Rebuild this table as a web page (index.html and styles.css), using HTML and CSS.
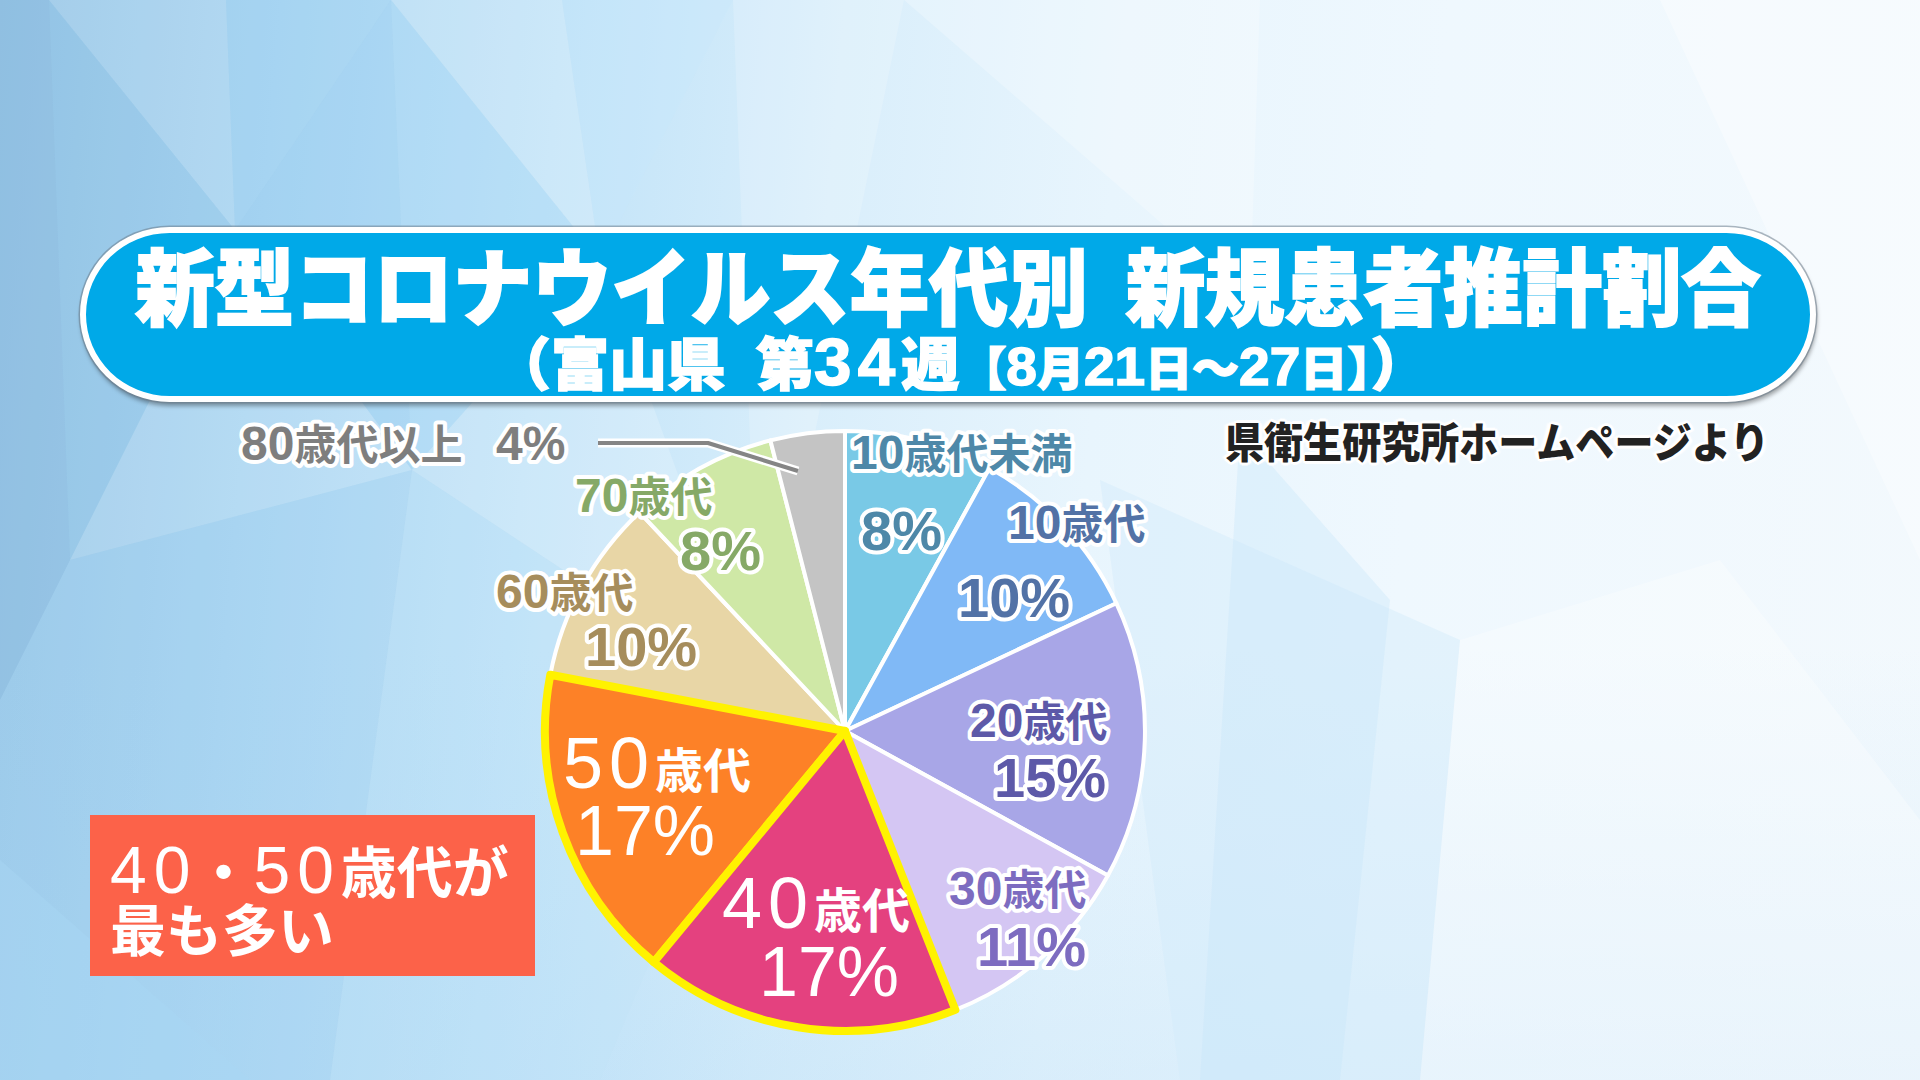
FILE: index.html
```html
<!DOCTYPE html>
<html lang="ja">
<head>
<meta charset="utf-8">
<title>新型コロナウイルス年代別 新規患者推計割合</title>
<link rel="stylesheet" href="styles.css">
</head>
<body>
<div class="stage">
  <svg class="bg" viewBox="0 0 1920 1080" preserveAspectRatio="none" aria-hidden="true">
    <polygon points="0,0 49,0 70,560 0,700" fill="#7fb1d6" opacity=".30"/>
    <polygon points="49,0 226,0 235,230" fill="#ffffff" opacity=".10"/>
    <polygon points="49,0 235,230 70,560" fill="#7cb6de" opacity=".18"/>
    <polygon points="226,0 391,0 235,230" fill="#9dd0f2" opacity=".30"/>
    <polygon points="235,230 412,470 70,560" fill="#ffffff" opacity=".12"/>
    <polygon points="391,0 412,470 235,230" fill="#8cc8ef" opacity=".25"/>
    <polygon points="391,0 562,0 600,260" fill="#ffffff" opacity=".18"/>
    <polygon points="391,0 600,260 412,470" fill="#a5d6f5" opacity=".30"/>
    <polygon points="562,0 733,0 600,260" fill="#c8e8fb" opacity=".30"/>
    <polygon points="600,260 760,700 412,470" fill="#ffffff" opacity=".18"/>
    <polygon points="733,0 904,0 760,700" fill="#ffffff" opacity=".18"/>
    <polygon points="904,0 1260,0 1250,300" fill="#ffffff" opacity=".25"/>
    <polygon points="70,560 412,470 330,1080 0,1080 0,700" fill="#9fd0f1" opacity=".25"/>
    <polygon points="412,470 760,700 600,1080 330,1080" fill="#bfe3f9" opacity=".25"/>
    <polygon points="0,860 250,1080 0,1080" fill="#a9d6f3" opacity=".45"/>
    <polygon points="1100,480 1460,640 1420,1080 1180,1080" fill="#d2ebfb" opacity=".45"/>
    <polygon points="1460,640 1720,560 1920,820 1920,1080 1420,1080" fill="#ffffff" opacity=".30"/>
    <polygon points="1660,0 1920,0 1920,560" fill="#ffffff" opacity=".35"/>
    <polygon points="1240,430 1390,600 1340,1080 1200,1080" fill="#c6e5fa" opacity=".35"/>
  </svg>

  <header class="title">
    <div class="t1"><span class="t1-in">新型コロナウイルス年代別<span class="sp"></span>新規患者推計割合</span></div>
    <div class="t2"><span class="t2-in">（富山県<span class="sp2"></span>第<span class="wk">34</span>週<span class="sm">【<span class="sn">8</span>月<span class="sn">21</span>日～<span class="sn">27</span>日】</span>）</span></div>
  </header>

  <main class="content">
    <svg class="chart" viewBox="0 402 1920 678" aria-label="年代別割合円グラフ">
      <g class="pie">
        <path class="s-u10" d="M845 731 L845 431 A300 300 0 0 1 989.5 468.1 Z"/>
        <path class="s-10" d="M845 731 L989.5 468.1 A300 300 0 0 1 1116.4 603.3 Z"/>
        <path class="s-20" d="M845 731 L1116.4 603.3 A300 300 0 0 1 1107.9 875.5 Z"/>
        <path class="s-30" d="M845 731 L1107.9 875.5 A300 300 0 0 1 955.4 1009.9 Z"/>
        <path class="s-60" d="M845 731 L550.3 674.8 A300 300 0 0 1 639.6 512.3 Z"/>
        <path class="s-70" d="M845 731 L639.6 512.3 A300 300 0 0 1 770.4 440.4 Z"/>
        <path class="s-80" d="M845 731 L770.4 440.4 A300 300 0 0 1 845 431 Z"/>
        <path class="s-50 hl" d="M845 731 L653.8 962.2 A300 300 0 0 1 550.3 674.8 Z"/>
        <path class="s-40 hl" d="M845 731 L955.4 1009.9 A300 300 0 0 1 653.8 962.2 Z"/>
      </g>

      <polyline class="leader-bg" points="598,443 708,443 798,471"/>
      <polyline class="leader" points="598,443 708,443 798,471"/>

      <text class="lbl c-u10" x="851" y="469"><tspan class="n">10</tspan>歳代未満</text>
      <text class="pct c-u10" x="861" y="550">8%</text>

      <text class="lbl c-10" x="1008" y="539"><tspan class="n">10</tspan>歳代</text>
      <text class="pct c-10" x="958" y="617">10%</text>

      <text class="lbl c-20" x="970" y="737"><tspan class="n">20</tspan>歳代</text>
      <text class="pct c-20" x="994" y="797">15%</text>

      <text class="lbl c-30" x="949" y="905"><tspan class="n">30</tspan>歳代</text>
      <text class="pct c-30" x="977" y="966">11%</text>

      <text class="big" x="722" y="928"><tspan class="bn">40</tspan>歳代</text>
      <text class="big bp" x="759" y="996">17%</text>

      <text class="big" x="563" y="788"><tspan class="bn">50</tspan>歳代</text>
      <text class="big bp" x="575" y="855">17%</text>

      <text class="lbl c-60" x="496" y="608"><tspan class="n">60</tspan>歳代</text>
      <text class="pct c-60" x="585" y="666">10%</text>

      <text class="lbl c-70" x="575" y="512"><tspan class="n">70</tspan>歳代</text>
      <text class="pct c-70" x="680" y="570">8%</text>

      <text class="lbl c-80" x="241" y="460"><tspan class="n">80</tspan>歳代以上<tspan class="n" x="496">4%</tspan></text>
    </svg>

    <p class="source">県衛生研究所ホームページより</p>

    <div class="callout">
      <p class="callout-line"><span class="cn">40</span><span class="dot">・</span><span class="cn">50</span>歳代が</p>
      <p class="callout-line">最も多い</p>
    </div>
  </main>
</div>
</body>
</html>
```

FILE: styles.css
```css
html, body {
  margin: 0;
  padding: 0;
}

body {
  width: 1920px;
  height: 1080px;
  overflow: hidden;
  font-family: "Noto Sans CJK JP", "Noto Sans", sans-serif;
}

.stage {
  position: relative;
  width: 1920px;
  height: 1080px;
  box-sizing: border-box;
  padding-top: 227px;
  overflow: hidden;
  background:
    linear-gradient(180deg, rgba(255,255,255,0) 0%, rgba(255,255,255,0) 60%, rgba(170,214,244,.25) 100%),
    linear-gradient(95deg, #98c6e6 0%, #abd6f2 14%, #c1e3f8 28%, #d9eefb 42%, #e8f5fd 56%, #eff8fe 72%, #f3f9fd 100%);
}

.bg {
  position: absolute;
  inset: 0;
  width: 1920px;
  height: 1080px;
  z-index: 0;
}

/* ---------- title pill ---------- */
.title {
  position: relative;
  z-index: 1;
  box-sizing: border-box;
  width: 1736px;
  height: 175px;
  margin-left: 80px;
  border: 6px solid #ffffff;
  border-radius: 90px / 88px;
  background: #00a9e8;
  box-shadow: 0 0 0 1.5px rgba(110, 125, 140, .55), 1px 4px 4px rgba(0, 0, 0, .35);
  display: flex;
  flex-direction: column;
  align-items: center;
  padding-top: 8px;
  color: #ffffff;
  font-weight: 900;
}

.t1 {
  font-size: 84px;
  line-height: 84px;
  white-space: nowrap;
  -webkit-text-stroke: 2px #ffffff;
}

.t1-in {
  display: inline-block;
  transform: scaleX(.945);
}

.sp {
  display: inline-block;
  width: 40px;
}

.t2 {
  margin-top: 4px;
  margin-left: 26px;
  font-size: 57px;
  line-height: 60px;
  height: 60px;
  white-space: nowrap;
  -webkit-text-stroke: 1.5px #ffffff;
}

.t2-in {
  display: inline-block;
  transform: scaleX(1.02);
}

.sp2 {
  display: inline-block;
  width: 30px;
}

.wk {
  font-family: "Liberation Sans", sans-serif;
  font-weight: 700;
  font-size: 66px;
  line-height: 1;
  letter-spacing: 6px;
}

.sm {
  font-size: 46px;
  line-height: 1;
}

.sn {
  font-family: "Liberation Sans", sans-serif;
  font-weight: 700;
  font-size: 54px;
  line-height: 1;
}

/* ---------- content area ---------- */
.content {
  position: relative;
  z-index: 1;
  display: grid;
  grid-template-columns: 1920px;
  grid-template-rows: 678px;
}

.content > * {
  grid-area: 1 / 1;
}

.chart {
  width: 1920px;
  height: 678px;
  display: block;
}

.pie path {
  stroke: #ffffff;
  stroke-width: 4;
  stroke-linejoin: round;
}

.pie path.hl {
  stroke: #fff200;
  stroke-width: 8;
}

.s-u10 { fill: #79c9e6; }
.s-10  { fill: #80b9f6; }
.s-20  { fill: #a8a6e7; }
.s-30  { fill: #d4c6f3; }
.s-40  { fill: #e4417f; }
.s-50  { fill: #fd8127; }
.s-60  { fill: #e8d6a6; }
.s-70  { fill: #cfe8a6; }
.s-80  { fill: #c4c4c4; }

.leader-bg {
  fill: none;
  stroke: #ffffff;
  stroke-width: 9;
  stroke-linejoin: round;
}

.leader {
  fill: none;
  stroke: #858585;
  stroke-width: 4;
  stroke-linejoin: round;
}

.lbl, .pct {
  font-family: "Noto Sans CJK JP", sans-serif;
  font-weight: 700;
  font-size: 42px;
  paint-order: stroke;
  stroke: #ffffff;
  stroke-width: 8px;
  stroke-linejoin: round;
}

.lbl .n {
  font-family: "Liberation Sans", "Noto Sans CJK JP", sans-serif;
  font-size: 48px;
}

.pct {
  font-family: "Liberation Sans", sans-serif;
  font-size: 56px;
}

.c-u10 { fill: #4e88a8; }
.c-10  { fill: #5272a6; }
.c-20  { fill: #5d59a8; }
.c-30  { fill: #7d6cc0; }
.c-60  { fill: #a68d5c; }
.c-70  { fill: #86a967; }
.c-80  { fill: #7e7e7e; }

.big {
  fill: #ffffff;
  font-family: "Noto Sans CJK JP", sans-serif;
  font-weight: 700;
  font-size: 48px;
}

.big .bn {
  font-family: "Liberation Sans", sans-serif;
  font-weight: 400;
  font-size: 72px;
  letter-spacing: 6px;
}

.big.bp {
  font-family: "Liberation Sans", sans-serif;
  font-weight: 400;
  font-size: 70px;
}

/* ---------- source note ---------- */
.source {
  justify-self: end;
  align-self: start;
  margin: 15px 151px 0 0;
  font-size: 42px;
  line-height: 46px;
  font-weight: 900;
  color: #222222;
  white-space: nowrap;
  transform: scaleX(.93);
  transform-origin: right center;
  text-shadow:
    3px 0 0 #fff, -3px 0 0 #fff, 0 3px 0 #fff, 0 -3px 0 #fff,
    2px 2px 0 #fff, -2px 2px 0 #fff, 2px -2px 0 #fff, -2px -2px 0 #fff,
    4px 1px 2px #fff, -4px -1px 2px #fff;
}

/* ---------- callout ---------- */
.callout {
  box-sizing: border-box;
  justify-self: start;
  align-self: end;
  width: 445px;
  height: 161px;
  margin: 0 0 104px 90px;
  padding: 22px 0 0 20px;
  background: #fc6249;
  color: #ffffff;
}

.callout-line {
  margin: 0;
  height: 60px;
  font-size: 56px;
  line-height: 60px;
  font-weight: 700;
  white-space: nowrap;
}

.cn {
  font-family: "Liberation Sans", sans-serif;
  font-weight: 400;
  font-size: 66px;
  line-height: 1;
  letter-spacing: 7px;
}

.dot {
  display: inline-block;
  width: 60px;
  margin-left: -4px;
  text-align: center;
}
```
